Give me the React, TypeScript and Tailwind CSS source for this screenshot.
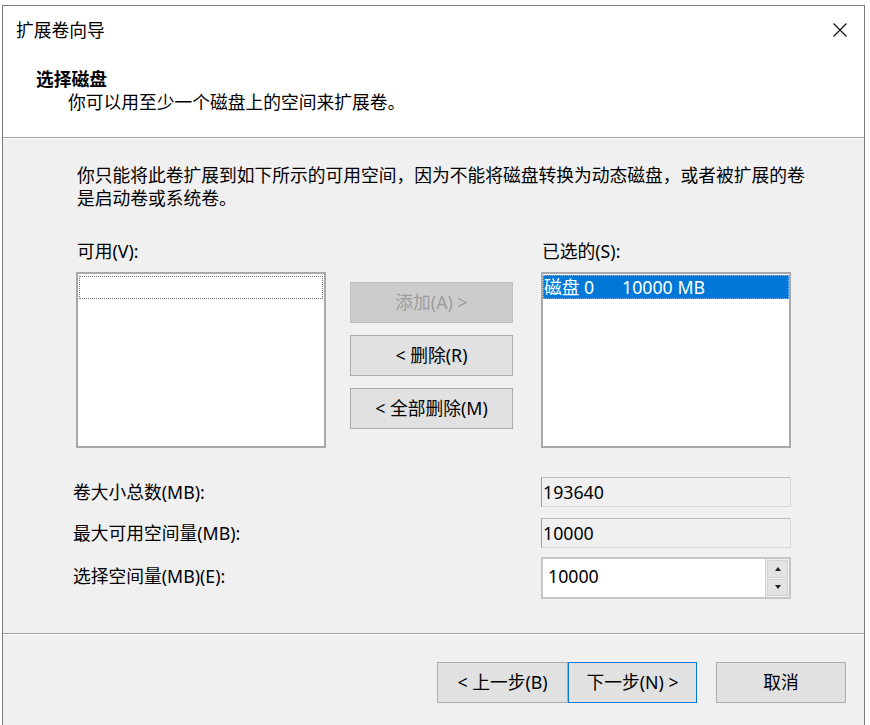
import React from "react";

const font = "font-['Noto_Sans','Noto_Sans_CJK_SC',sans-serif]";

function Btn({
  children,
  className = "",
}: {
  children: React.ReactNode;
  className?: string;
}) {
  return (
    <div
      className={`flex items-center justify-center border border-[#adadad] bg-[#e1e1e1] text-black ${className}`}
    >
      {children}
    </div>
  );
}

export default function App() {
  return (
    <div className={`w-[870px] h-[725px] bg-white overflow-hidden ${font} text-[17.75px] text-black`}>
      <div className="ml-[2px] mt-[5px] w-[863px] h-[720px] border-l border-t border-r border-[#7a7a7a] flex flex-col">
        {/* header */}
        <div className="h-[131px] bg-white flex flex-col">
          <div className="h-[48px] flex items-center justify-between pl-[13px] pr-[17px]">
            <span className="leading-[23px]">扩展卷向导</span>
            <svg width="14" height="14" viewBox="0 0 14 14" className="block">
              <path d="M0.5 0.5 L13.5 13.5 M13.5 0.5 L0.5 13.5" stroke="#111" strokeWidth="1.2" fill="none" />
            </svg>
          </div>
          <div className="mt-[14px] pl-[33px] leading-[23px] font-bold">选择磁盘</div>
          <div className="pl-[65px] leading-[23px]">你可以用至少一个磁盘上的空间来扩展卷。</div>
        </div>
        <div className="h-px bg-[#a0a0a0]" />
        <div className="h-px bg-white" />
        {/* body */}
        <div className="h-[494px] bg-[#f0f0f0] flex flex-col">
          <div className="mt-[25px] pl-[74px] leading-[23px]">
            你只能将此卷扩展到如下所示的可用空间，因为不能将磁盘转换为动态磁盘，或者被扩展的卷
            <br />
            是启动卷或系统卷。
          </div>
          <div className="mt-[30px] pl-[73px] flex leading-[23px]">
            <div className="w-[250px] pl-px">可用(V):</div>
            <div className="ml-[215px] pl-px">已选的(S):</div>
          </div>
          <div className="mt-[9px] pl-[73px] flex">
            <div className="w-[250px] h-[176px] border-2 border-[#a9a9ad] bg-white">
              <div className="mt-[2px] ml-px mr-px h-[23px] border border-dotted border-[#7a7a7a]" />
            </div>
            <div className="ml-[24px] w-[163px] flex flex-col">
              <div className="mt-[10px] h-[41px] flex items-center justify-center border border-[#bfbfbf] bg-[#cccccc] text-[#9d9d9d]">
                添加(A) &gt;
              </div>
              <Btn className="mt-[12px] h-[41px]">&lt; 删除(R)</Btn>
              <Btn className="mt-[12px] h-[41px]">&lt; 全部删除(M)</Btn>
            </div>
            <div className="ml-[28px] w-[250px] h-[176px] border-2 border-[#a9a9ad] bg-white">
              <div className="mt-px h-[24px] bg-[#0078d7] text-white flex items-center leading-[23px] border border-dotted border-[#7fb8ea]">
                <span className="w-[78px]">磁盘 0</span>
                <span>10000 MB</span>
              </div>
            </div>
          </div>
          {/* fields */}
          <div className="mt-[29px] flex items-center h-[30px]">
            <div className="pl-[70px] w-[538px] leading-[23px]">卷大小总数(MB):</div>
            <div className="w-[250px] h-[30px] bg-[#f0f0f0] border border-[#d7d7d7] border-l-[#9a9a9a] border-t-[#bdbdbd] flex items-center pl-px leading-[23px]">
              193640
            </div>
          </div>
          <div className="mt-[11px] flex items-center h-[30px]">
            <div className="pl-[70px] w-[538px] leading-[23px]">最大可用空间量(MB):</div>
            <div className="w-[250px] h-[30px] bg-[#f0f0f0] border border-[#d7d7d7] border-l-[#9a9a9a] border-t-[#bdbdbd] flex items-center pl-px leading-[23px]">
              10000
            </div>
          </div>
          <div className="mt-[9px] flex items-center h-[42px]">
            <div className="pl-[70px] w-[538px] leading-[23px] -mt-[3px]">选择空间量(MB)(E):</div>
            <div className="w-[250px] h-[42px] border-2 border-[#c6c6c6] bg-white flex">
              <div className="flex-1 flex items-center pl-[5px] leading-[23px] -mt-[3px]">10000</div>
              <div className="w-[24px] flex flex-col gap-px p-px bg-[#f0f0f0] border-l border-[#d0d0d0]">
                <div className="flex-1 bg-[#e3e3e3] border border-[#d4d4d4] flex items-center justify-center">
                  <svg width="6" height="4" viewBox="0 0 6 4">
                    <path d="M3 0 L6 4 L0 4 Z" fill="#222" />
                  </svg>
                </div>
                <div className="flex-1 bg-[#e3e3e3] border border-[#d4d4d4] flex items-center justify-center">
                  <svg width="6" height="4" viewBox="0 0 6 4">
                    <path d="M0 0 L6 0 L3 4 Z" fill="#222" />
                  </svg>
                </div>
              </div>
            </div>
          </div>
        </div>
        <div className="h-px bg-[#a0a0a0]" />
        <div className="h-px bg-white" />
        {/* footer */}
        <div className="flex-1 bg-[#f0f0f0] flex justify-end pt-[27px] pr-[18px]">
          <div className="flex h-[41px]">
            <Btn className="w-[131px] h-[41px]">&lt; 上一步(B)</Btn>
            <div className="w-[129px] h-[41px] flex items-center justify-center border border-[#0078d7] bg-[#e1e1e1]">
              下一步(N) &gt;
            </div>
            <Btn className="ml-[19px] w-[130px] h-[41px]">取消</Btn>
          </div>
        </div>
      </div>
    </div>
  );
}
